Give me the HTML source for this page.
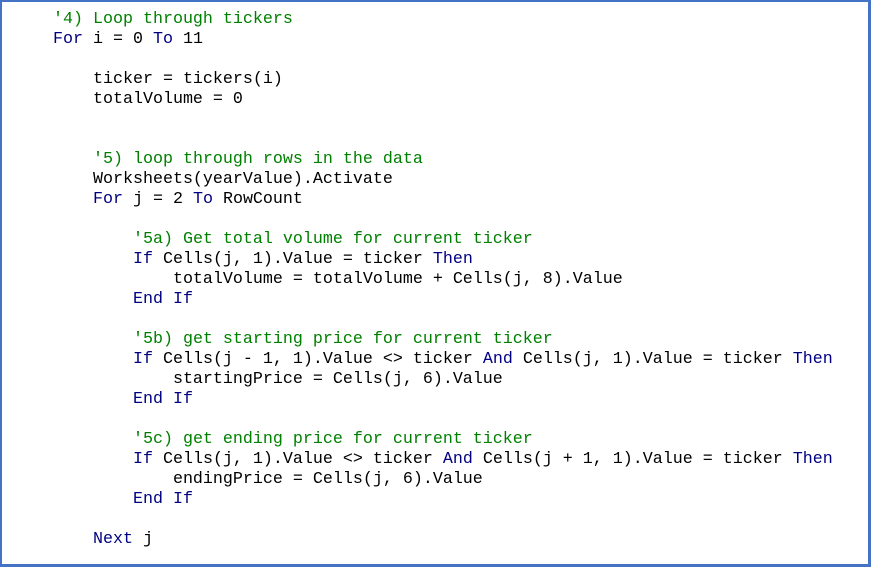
<html><head><style>
body{margin:0;width:871px;height:567px;background:#fff;overflow:hidden}
.b{position:absolute;left:0;top:0;border:2px solid #4472c4;border-right-width:3px;border-bottom-width:3px;width:866px;height:562px}
pre{position:absolute;left:53px;top:10px;margin:0;font-family:"Liberation Mono",monospace;font-size:16.67px;line-height:20px;color:#000}
.c{color:#008000}.k{color:#000080}
</style></head><body><div class="b"></div><pre><span class="c">'4) Loop through tickers</span>
<span class="k">For</span> i = 0 <span class="k">To</span> 11

    ticker = tickers(i)
    totalVolume = 0


    <span class="c">'5) loop through rows in the data</span>
    Worksheets(yearValue).Activate
    <span class="k">For</span> j = 2 <span class="k">To</span> RowCount

        <span class="c">'5a) Get total volume for current ticker</span>
        <span class="k">If</span> Cells(j, 1).Value = ticker <span class="k">Then</span>
            totalVolume = totalVolume + Cells(j, 8).Value
        <span class="k">End If</span>

        <span class="c">'5b) get starting price for current ticker</span>
        <span class="k">If</span> Cells(j - 1, 1).Value &lt;&gt; ticker <span class="k">And</span> Cells(j, 1).Value = ticker <span class="k">Then</span>
            startingPrice = Cells(j, 6).Value
        <span class="k">End If</span>

        <span class="c">'5c) get ending price for current ticker</span>
        <span class="k">If</span> Cells(j, 1).Value &lt;&gt; ticker <span class="k">And</span> Cells(j + 1, 1).Value = ticker <span class="k">Then</span>
            endingPrice = Cells(j, 6).Value
        <span class="k">End If</span>

    <span class="k">Next</span> j</pre></body></html>
